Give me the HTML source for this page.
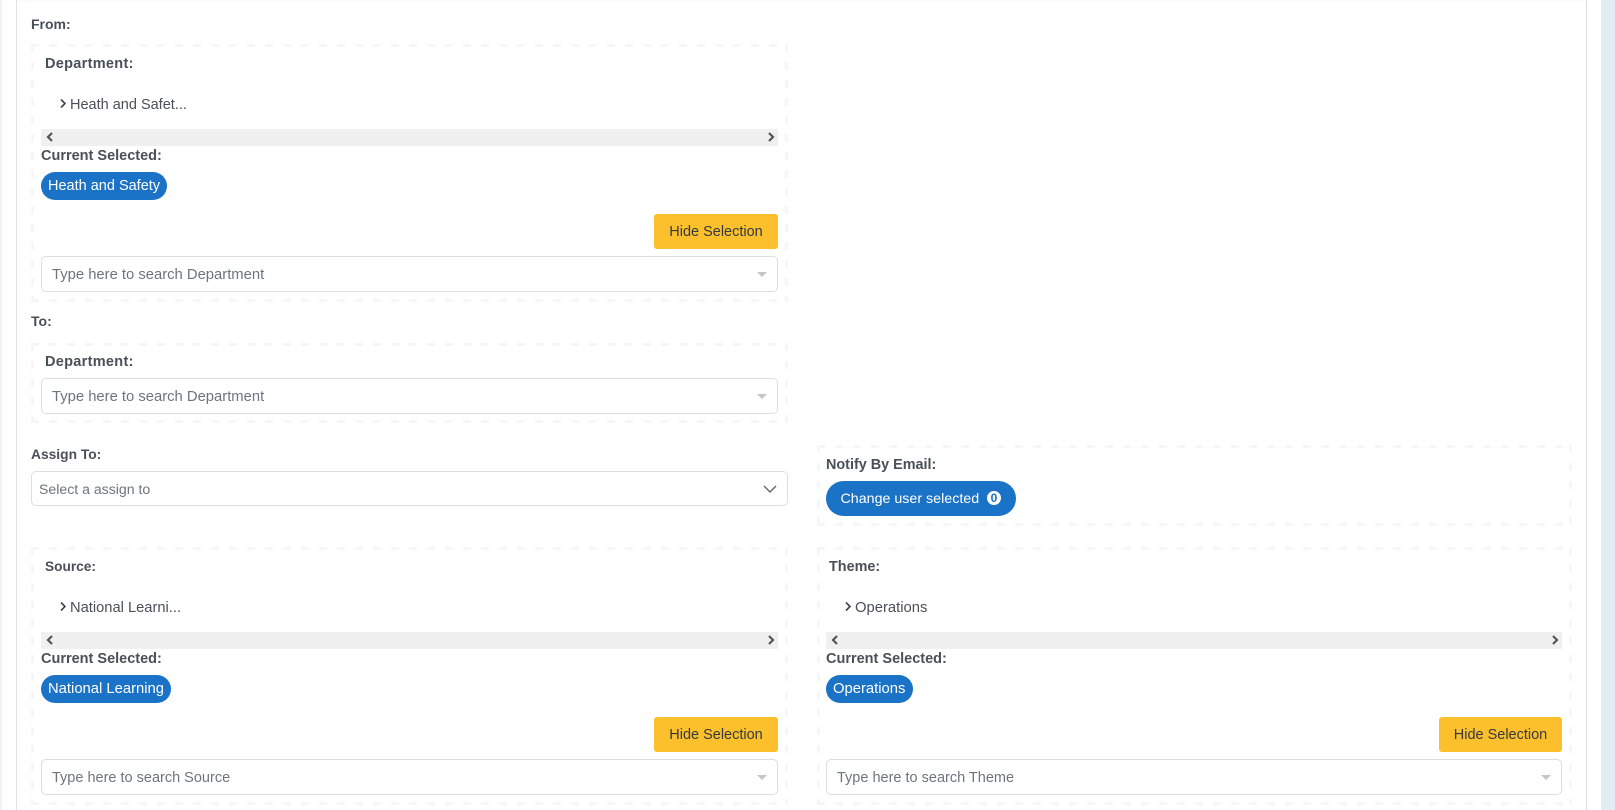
<!DOCTYPE html>
<html><head><meta charset="utf-8"><style>
html,body{margin:0;padding:0;width:1615px;height:810px;overflow:hidden;background:#fff}
body{position:relative;font-family:"Liberation Sans",sans-serif;font-size:14.5px;color:#495057}
.a,.t,.box,.sb,.inp,.pill,.btn{position:absolute;box-sizing:border-box}
.t{white-space:nowrap;line-height:20px;height:20px}
.b{font-weight:700;color:#495057;white-space:nowrap;line-height:20px;height:20px;position:absolute;font-size:14.5px}
.box{background:
repeating-linear-gradient(90deg,#f5f6f8 0 8px,transparent 8px 18px) left top/100% 3px no-repeat,
repeating-linear-gradient(90deg,#f5f6f8 0 8px,transparent 8px 18px) left bottom/100% 3px no-repeat,
repeating-linear-gradient(180deg,#f5f6f8 0 8px,transparent 8px 18px) left top/3px 100% no-repeat,
repeating-linear-gradient(180deg,#f5f6f8 0 8px,transparent 8px 18px) right top/3px 100% no-repeat}
.sb{height:17px;background:#f0f0f0}
.inp{height:36px;border:1px solid #dedee0;border-radius:5px;background:#fff}
.inp span{position:absolute;left:10px;top:8px;line-height:20px;color:#6c757d;white-space:nowrap}
.inp i{position:absolute;right:10px;top:15px;width:0;height:0;border-left:5px solid transparent;border-right:5px solid transparent;border-top:5px solid #c6c6c8}
.pill{height:28px;border-radius:14px;background:#1a73c6;color:#fff;line-height:29px;padding-left:7px;white-space:nowrap}
.btn{width:124px;height:35px;background:#fcc02d;border-radius:3px;color:#343a40;line-height:37px;text-align:center;white-space:nowrap}
svg{position:absolute;overflow:visible}
</style></head><body>
<div class="a" style="left:0;top:0;width:2px;height:810px;background:#eef1f9"></div>
<div class="a" style="left:16px;top:0;width:1px;height:810px;background:#dfe1e8"></div>
<div class="a" style="left:1586px;top:0;width:1px;height:810px;background:#dcdde2"></div>
<div class="a" style="left:1601px;top:0;width:14px;height:810px;background:#e4ebf5"></div>
<div class="a" style="left:17px;top:0;width:1569px;height:2px;background:#fbfbfd"></div>

<div class="b" style="left:31px;top:14px;font-size:14px">From:</div>
<div class="box" style="left:31px;top:44px;width:757px;height:258px"></div>
<div class="b" style="left:45px;top:54px;font-size:14.5px;letter-spacing:.3px">Department:</div>
<svg style="left:60px;top:99px" width="6" height="10"><path d="M1 .5l4 4-4 4" fill="none" stroke="#3d4450" stroke-width="1.6"/></svg>
<div class="t" style="left:70px;top:95px">Heath and Safet...</div>
<div class="sb" style="left:41px;top:129px;width:737px"></div>
<svg style="left:46px;top:132px" width="8" height="10"><path d="M6 1L2 5l4 4" fill="none" stroke="#555" stroke-width="2.2"/></svg>
<svg style="left:767px;top:132px" width="8" height="10"><path d="M2 1l4 4-4 4" fill="none" stroke="#555" stroke-width="2.2"/></svg>
<div class="b" style="left:41px;top:146px">Current Selected:</div>
<div class="pill" style="left:41px;top:172px;width:126px">Heath and Safety</div>
<div class="btn" style="left:654px;top:214px">Hide Selection</div>
<div class="inp" style="left:41px;top:256px;width:737px"><span style="font-size:14.8px">Type here to search Department</span><i></i></div>

<div class="b" style="left:31px;top:311px;font-size:14px">To:</div>
<div class="box" style="left:31px;top:343px;width:757px;height:80px"></div>
<div class="b" style="left:45px;top:352px;letter-spacing:.3px">Department:</div>
<div class="inp" style="left:41px;top:378px;width:737px"><span style="font-size:14.8px">Type here to search Department</span><i></i></div>

<div class="b" style="left:31px;top:445px;font-size:13.8px">Assign To:</div>
<div class="inp" style="left:31px;top:471px;width:757px;height:35px"><span style="left:7px;top:7px;font-size:14.1px">Select a assign to</span>
<svg style="left:731px;top:13px" width="14" height="8"><path d="M1 1l6 6 6-6" fill="none" stroke="#636b78" stroke-width="1.5"/></svg></div>

<div class="box" style="left:817px;top:445px;width:755px;height:81px"></div>
<div class="b" style="left:826px;top:455px;font-size:14.4px">Notify By Email:</div>
<div class="pill" style="left:826px;top:481px;width:190px;height:35px;border-radius:18px;line-height:37px;padding-left:14.5px;font-size:14.25px">Change user selected</div>
<div class="a" style="left:987px;top:491px;width:14px;height:14px;border-radius:50%;background:#fff;color:#1a73c6;font-weight:700;font-size:12px;line-height:14px;text-align:center">0</div>

<div class="box" style="left:31px;top:547px;width:757px;height:258px"></div>
<div class="b" style="left:45px;top:557px;font-size:13.7px">Source:</div>
<svg style="left:60px;top:602px" width="6" height="10"><path d="M1 .5l4 4-4 4" fill="none" stroke="#3d4450" stroke-width="1.6"/></svg>
<div class="t" style="left:70px;top:598px;font-size:14.7px">National Learni...</div>
<div class="sb" style="left:41px;top:632px;width:737px"></div>
<svg style="left:46px;top:635px" width="8" height="10"><path d="M6 1L2 5l4 4" fill="none" stroke="#555" stroke-width="2.2"/></svg>
<svg style="left:767px;top:635px" width="8" height="10"><path d="M2 1l4 4-4 4" fill="none" stroke="#555" stroke-width="2.2"/></svg>
<div class="b" style="left:41px;top:649px">Current Selected:</div>
<div class="pill" style="left:41px;top:675px;width:130px;font-size:14.8px">National Learning</div>
<div class="btn" style="left:654px;top:717px">Hide Selection</div>
<div class="inp" style="left:41px;top:759px;width:737px"><span style="font-size:14.5px">Type here to search Source</span><i></i></div>

<div class="box" style="left:817px;top:547px;width:755px;height:258px"></div>
<div class="b" style="left:829px;top:557px;font-size:14.4px">Theme:</div>
<svg style="left:845px;top:602px" width="6" height="10"><path d="M1 .5l4 4-4 4" fill="none" stroke="#3d4450" stroke-width="1.6"/></svg>
<div class="t" style="left:855px;top:598px;font-size:14.8px">Operations</div>
<div class="sb" style="left:826px;top:632px;width:736px"></div>
<svg style="left:831px;top:635px" width="8" height="10"><path d="M6 1L2 5l4 4" fill="none" stroke="#555" stroke-width="2.2"/></svg>
<svg style="left:1551px;top:635px" width="8" height="10"><path d="M2 1l4 4-4 4" fill="none" stroke="#555" stroke-width="2.2"/></svg>
<div class="b" style="left:826px;top:649px">Current Selected:</div>
<div class="pill" style="left:826px;top:675px;width:87px;font-size:14.8px">Operations</div>
<div class="btn" style="left:1439px;top:717px;width:123px">Hide Selection</div>
<div class="inp" style="left:826px;top:759px;width:736px"><span style="font-size:14.5px">Type here to search Theme</span><i></i></div>
</body></html>
